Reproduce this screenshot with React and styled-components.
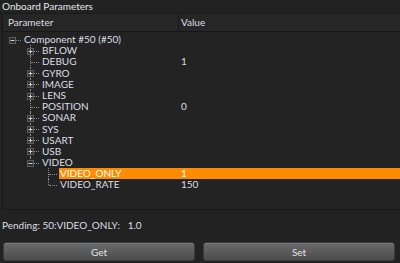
import React from 'react';
import styled, { createGlobalStyle } from 'styled-components';

const Global = createGlobalStyle`
  html, body {
    margin: 0;
    padding: 0;
    background: #222222;
  }
  body {
    font-family: Lato, "Open Sans", sans-serif;
    font-size: 10px;
    color: #dcdfe3;
  }
`;

const Panel = styled.div`
  width: 400px;
  height: 263px;
  display: flex;
  flex-direction: column;
  overflow: hidden;
  background: #222222;
`;

const Title = styled.div`
  height: 13px;
  line-height: 12px;
  padding-left: 2px;
  color: #e4e6ea;
  border-bottom: 1px solid #1a1a1a;
`;

const TreeFrame = styled.div`
  margin-left: 2px;
  height: 195px;
  border-left: 1px solid #161616;
  border-bottom: 1px solid #161616;
  background: #232323;
  display: flex;
  flex-direction: column;
`;

const Header = styled.div`
  height: 17px;
  display: grid;
  grid-template-columns: 176px 1fr;
  background: #262626;
  border-bottom: 1px solid #161616;
`;

const HeaderCell = styled.div`
  padding-left: ${({ $pad }) => $pad}px;
  line-height: 17px;
  border-right: ${({ $divider }) => ($divider ? '1px solid #181818' : 'none')};
`;

const Body = styled.div`
  padding-top: 2px;
  display: flex;
  flex-direction: column;
`;

const Row = styled.div`
  height: 11.2px;
  display: flex;
  align-items: stretch;
`;

const Guide = styled.div`
  width: 18px;
  flex: none;
`;

const Branch = styled.div`
  width: 18px;
  flex: none;
  position: relative;
  &::before {
    content: '';
    position: absolute;
    left: 9px;
    top: 0;
    height: ${({ $last, $root }) => ($root ? '0' : $last ? '50%' : '100%')};
    border-left: 1px dotted #8a8a8a;
  }
  &::after {
    content: '';
    position: absolute;
    left: 10px;
    right: 0;
    top: 50%;
    border-top: 1px dotted #8a8a8a;
  }
`;

const Expander = styled.svg`
  position: absolute;
  left: 6px;
  top: 50%;
  margin-top: -3px;
  z-index: 1;
`;

const Content = styled.div`
  flex: 1;
  display: grid;
  grid-template-columns: ${({ $nameW }) => $nameW}px 1fr;
  margin-left: 2px;
  background: ${({ $selected }) => ($selected ? '#ff8c00' : 'transparent')};
  color: ${({ $selected }) => ($selected ? '#ffffff' : '#dcdfe3')};
  line-height: 11.2px;
`;

const Name = styled.div`
  padding-left: 1px;
  white-space: nowrap;
`;

const Value = styled.div`
  padding-left: 3px;
`;

const Pending = styled.div`
  padding: 9px 0 0 2px;
  height: 20px;
  line-height: 12px;
  color: #dcdfe3;
`;

const Buttons = styled.div`
  display: grid;
  grid-template-columns: 1fr 1fr;
  gap: 8px;
  padding: 3px 5px 0 3px;
`;

const Button = styled.button`
  height: 19px;
  border: 1px solid #3a3d40;
  border-radius: 3px;
  background: linear-gradient(#6a6a6a, #4c4c4c);
  color: #e2e4e8;
  font-family: Lato, "Open Sans", sans-serif;
  font-size: 10px;
  padding: 0;
  box-shadow: inset 0 1px 0 #787878;
`;

const Box = ({ open }) => (
  <Expander width="7" height="7" viewBox="0 0 7 7">
    <rect x="0.5" y="0.5" width="6" height="6" fill="#2c2c2c" stroke="#5e5e5e" />
    <line x1="1.5" y1="3.5" x2="5.5" y2="3.5" stroke="#d0d0d0" />
    {!open && <line x1="3.5" y1="1.5" x2="3.5" y2="5.5" stroke="#d0d0d0" />}
  </Expander>
);

const rows = [
  { level: 0, name: 'Component #50 (#50)', box: 'open', root: true },
  { level: 1, name: 'BFLOW', box: 'closed' },
  { level: 1, name: 'DEBUG', value: '1' },
  { level: 1, name: 'GYRO', box: 'closed' },
  { level: 1, name: 'IMAGE', box: 'closed' },
  { level: 1, name: 'LENS', box: 'closed' },
  { level: 1, name: 'POSITION', value: '0' },
  { level: 1, name: 'SONAR', box: 'closed' },
  { level: 1, name: 'SYS', box: 'closed' },
  { level: 1, name: 'USART', box: 'closed' },
  { level: 1, name: 'USB', box: 'closed' },
  { level: 1, name: 'VIDEO', box: 'open', last: true },
  { level: 2, name: 'VIDEO_ONLY', value: '1', selected: true },
  { level: 2, name: 'VIDEO_RATE', value: '150', last: true },
];

const TreeRow = ({ row }) => {
  const guides = [];
  for (let i = 0; i < row.level; i++) guides.push(<Guide key={i} />);
  const used = 18 * (row.level + 1) + 2;
  return (
    <Row>
      {guides}
      <Branch $last={row.last} $root={row.root}>
        {row.box && <Box open={row.box === 'open'} />}
      </Branch>
      <Content $selected={row.selected} $nameW={176 - used - 1}>
        <Name>{row.name}</Name>
        <Value>{row.value}</Value>
      </Content>
    </Row>
  );
};

export default function App() {
  return (
    <Panel>
      <Global />
      <Title>Onboard Parameters</Title>
      <TreeFrame>
        <Header>
          <HeaderCell $pad={5} $divider>Parameter</HeaderCell>
          <HeaderCell $pad={2}>Value</HeaderCell>
        </Header>
        <Body>
          {rows.map((r) => (
            <TreeRow key={r.name} row={r} />
          ))}
        </Body>
      </TreeFrame>
      <Pending>Pending: 50:VIDEO_ONLY:&nbsp;&nbsp; 1.0</Pending>
      <Buttons>
        <Button>Get</Button>
        <Button>Set</Button>
      </Buttons>
    </Panel>
  );
}
